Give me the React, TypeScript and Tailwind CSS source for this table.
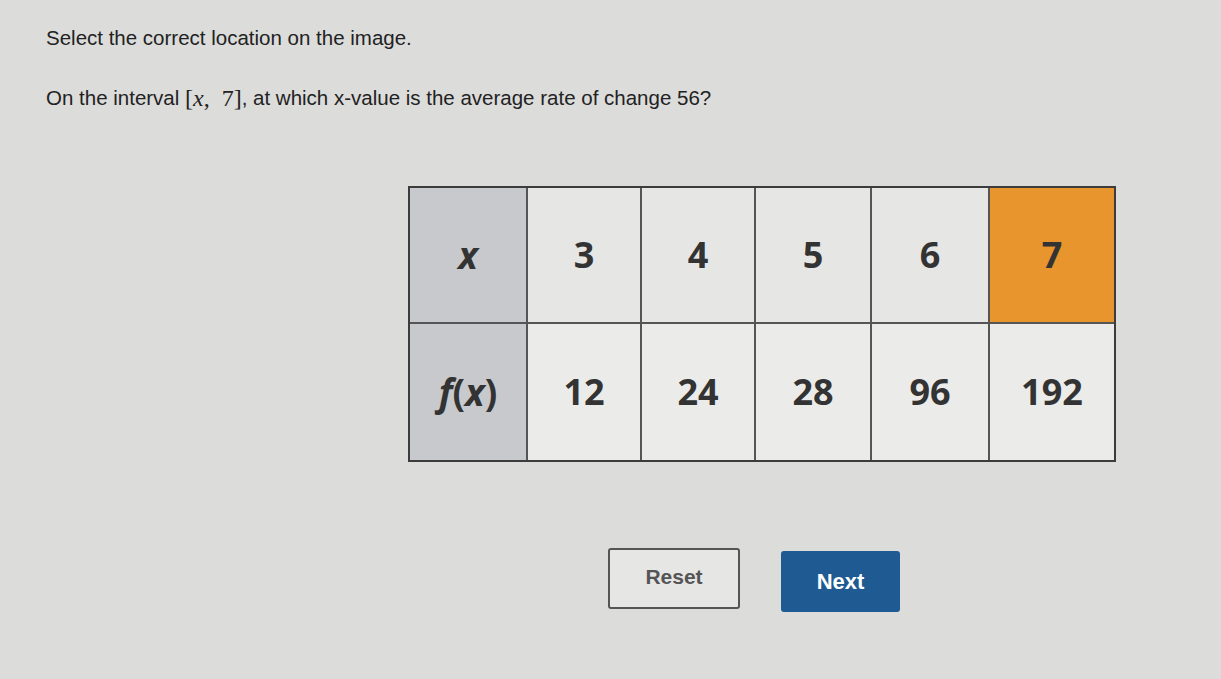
import React from "react";

export default function App() {
  const xs = ["3", "4", "5", "6", "7"];
  const fs = ["12", "24", "28", "96", "192"];
  const widths = ["w-[114px]", "w-[114px]", "w-[116px]", "w-[118px]", "w-[124px]"];
  return (
    <div className="w-[1221px] h-[679px] bg-[#dcdcdb] text-[#222] overflow-hidden" style={{ fontFamily: '"Liberation Sans", Arial, sans-serif' }}>
      <div className="pl-[46px] pt-[26px] text-[20.5px] leading-[24px]">Select the correct location on the image.</div>
      <div className="pl-[46px] pt-[36px] text-[20.5px] leading-[24px] flex items-center">
        <span>On the interval&nbsp;</span>
        <span className="text-[24px]" style={{ fontFamily: '"Liberation Serif", serif' }}>[<i>x</i>,&nbsp; 7]</span>
        <span>, at which x-value is the average rate of change 56?</span>
      </div>
      <div className="flex pl-[408px] pt-[76px]">
        <div className="border-2 border-[#3c3c3c] flex flex-col" style={{ fontFamily: '"Open Sans", sans-serif' }}>
          <div className="flex h-[136px] border-b-2 border-[#555]">
            <div className="w-[118px] bg-[#c8c9cd] border-r-2 border-[#555] flex items-center justify-center text-[37px] font-bold italic text-[#333]">x</div>
            {xs.map((v, i) => (
              <div key={v} className={`${widths[i]} ${i === 4 ? "bg-[#e8952e]" : "bg-[#e6e6e4] border-r-2 border-[#555]"} flex items-center justify-center text-[36px] font-bold text-[#333]`}>{v}</div>
            ))}
          </div>
          <div className="flex h-[136px]">
            <div className="w-[118px] bg-[#c8c9cd] border-r-2 border-[#555] flex items-center justify-center text-[37px] font-bold text-[#333]"><i>f</i>(<i>x</i>)</div>
            {fs.map((v, i) => (
              <div key={v} className={`${widths[i]} bg-[#ebebea] ${i === 4 ? "" : "border-r-2 border-[#555]"} flex items-center justify-center text-[36px] font-bold text-[#333]`}>{v}</div>
            ))}
          </div>
        </div>
      </div>
      <div className="flex pl-[608px] pt-[86px] gap-[41px] items-start">
        <button className="w-[132px] h-[61px] border-2 border-[#555] rounded-[3px] bg-[#e6e6e5] text-[21px] font-bold text-[#555] pb-[4px]">Reset</button>
        <button className="mt-[3px] w-[119px] h-[61px] rounded-[3px] bg-[#1f5b92] text-[22px] font-bold text-white">Next</button>
      </div>
    </div>
  );
}
